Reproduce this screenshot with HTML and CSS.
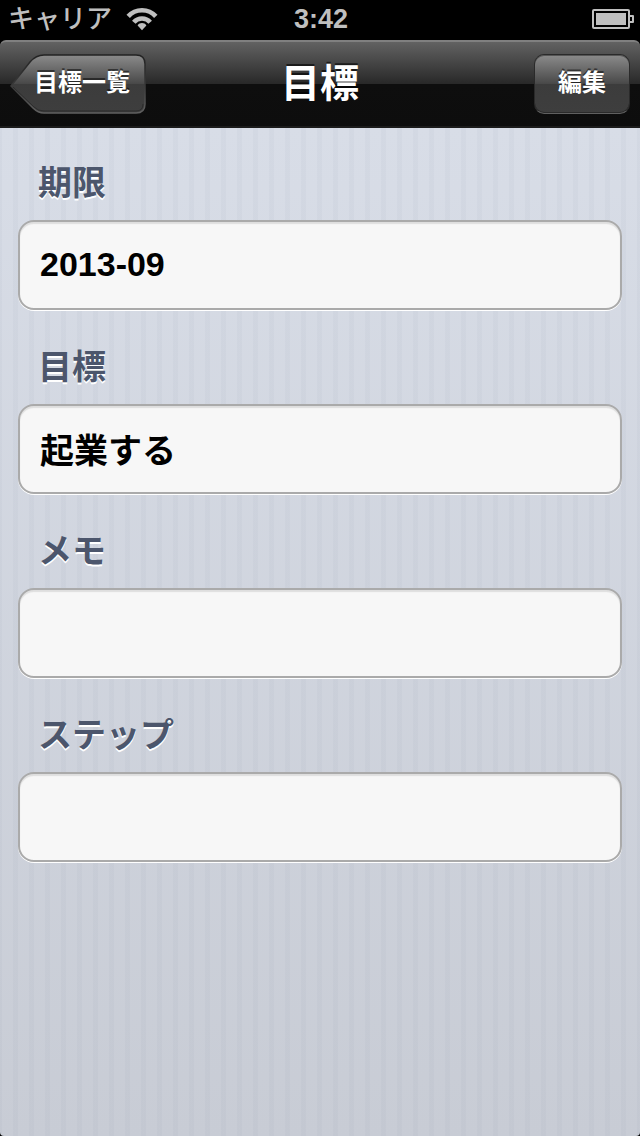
FILE: index.html
```html
<!DOCTYPE html>
<html lang="ja">
<head>
<meta charset="utf-8">
<meta name="viewport" content="width=device-width, initial-scale=1">
<title>目標</title>
<link rel="stylesheet" href="styles.css">
</head>
<body>
<div class="status-bar">
  <div class="carrier">
    <span>キャリア</span>
    <svg class="wifi" width="32" height="24" viewBox="0 0 32 24" aria-hidden="true">
      <g fill="none" stroke="#bfbfbf" stroke-width="4.600">
        <path d="M2.200 9.400C9.500 1.200 22.500 1.200 29.800 9.400"/>
        <path d="M7.800 15.200C12 10.200 20 10.200 24.200 15.200"/>
      </g>
      <path fill="#bfbfbf" d="M16 23.200L11.600 18.400C13.600 15.200 18.400 15.200 20.400 18.400Z"/>
    </svg>
  </div>
  <span class="time">3:42</span>
  <svg class="battery" width="42" height="20" viewBox="0 0 42 20" aria-hidden="true">
    <rect x="1" y="1" width="36" height="18" rx="1" fill="none" stroke="#bfbfbf" stroke-width="2"/>
    <rect x="4" y="4" width="30" height="12" fill="#bfbfbf"/>
    <path d="M38 7H41V13H38" fill="none" stroke="#bfbfbf" stroke-width="2" stroke-linejoin="round"/>
  </svg>
</div>
<header class="nav-bar">
  <button class="nav-button back" type="button">
    <svg class="back-shape" width="136" height="60" viewBox="0 0 136 60" aria-hidden="true">
      <defs>
        <linearGradient id="face" x1="0" y1="0" x2="0" y2="1">
          <stop offset="0" stop-color="#8b8b8b"/>
          <stop offset=".5" stop-color="#484848"/>
          <stop offset=".5" stop-color="#3c3c3c"/>
          <stop offset="1" stop-color="#3e3e3e"/>
        </linearGradient>
        <linearGradient id="rim" x1="0" y1="0" x2="0" y2="1">
          <stop offset="0" stop-color="#222"/>
          <stop offset=".5" stop-color="#383838"/>
          <stop offset="1" stop-color="#606060"/>
        </linearGradient>
      </defs>
      <path fill="url(#face)" stroke="url(#rim)" stroke-width="1.500" d="M1 32L20 8Q26 1 34 1H126Q135 1 135 10V50Q135 59 126 59H34Q28 59 23 54Z"/>
      <path fill="none" stroke="#222" stroke-opacity=".6" d="M3 33L24 53Q28 57 34 57H126Q133 57 133 50"/>
    </svg>
    <span class="back-text">目標一覧</span>
  </button>
  <h1 class="title">目標</h1>
  <button class="nav-button edit" type="button">編集</button>
</header>
<main class="form">
  <div class="field">
    <label class="label" for="deadline">期限</label>
    <input class="box" id="deadline" type="text" value="2013-09" readonly>
  </div>
  <div class="field">
    <label class="label" for="goal">目標</label>
    <input class="box" id="goal" type="text" value="起業する" readonly>
  </div>
  <div class="field">
    <label class="label" for="memo">メモ</label>
    <input class="box" id="memo" type="text" readonly>
  </div>
  <div class="field">
    <label class="label" for="steps">ステップ</label>
    <input class="box" id="steps" type="text" readonly>
  </div>
</main>
</body>
</html>
```
FILE: styles.css
```css
* {
  box-sizing: border-box;
}

body {
  margin: 0;
  min-height: 100vh;
  display: flex;
  flex-direction: column;
  background: #000;
  font-family: "Liberation Sans", "Noto Sans CJK JP", sans-serif;
}

.status-bar {
  display: grid;
  grid-template-columns: 1fr auto 1fr;
  align-items: center;
  height: 40px;
  padding: 0 6px 2px 8px;
  color: #bfbfbf;
}

.carrier {
  display: flex;
  align-items: center;
  gap: 14px;
  font-size: 26px;
  line-height: 38px;
  font-weight: 500;
}

.time {
  font-size: 27px;
  line-height: 38px;
  font-weight: bold;
}

.battery {
  justify-self: end;
}

.nav-bar {
  display: grid;
  grid-template-columns: 136px 1fr 136px;
  align-items: center;
  height: 88px;
  padding: 0 10px;
  border-top: 2px solid #808080;
  border-bottom: 2px solid #1c1c1c;
  border-radius: 6px 6px 0 0;
  background: linear-gradient(#626262 0, #282828 42px, #0e0e0e 42px, #0d0d0d 100%);
  color: #fff;
}

.nav-button {
  position: relative;
  height: 60px;
  margin: 0;
  padding: 0 23px 2px;
  border: 0;
  background: none;
  color: #fff;
  font: bold 24px/56px "Liberation Sans", "Noto Sans CJK JP", sans-serif;
  text-shadow: 0 -2px 0 rgba(0, 0, 0, .5);
}

.back {
  justify-self: start;
  padding: 0 16px 2px 24px;
}

.back-shape {
  position: absolute;
  inset: 0;
}

.back-text {
  position: relative;
}

.edit {
  justify-self: end;
  border: 1px solid #2a2a2a;
  border-bottom-color: #606060;
  border-radius: 10px;
  background: linear-gradient(#8b8b8b 0, #484848 29px, #3c3c3c 29px, #3e3e3e 100%);
  box-shadow: inset 0 -1px 0 #2a2a2a, inset 0 1px 0 #555;
}

.title {
  margin: 0;
  font-size: 39px;
  line-height: 78px;
  font-weight: bold;
  text-align: center;
  text-shadow: 0 -2px 0 rgba(0, 0, 0, .6);
}

.form {
  flex: 1;
  display: flex;
  flex-direction: column;
  gap: 34px;
  padding: 32px 18px;
  border-radius: 0 0 4px 4px;
  background:
    repeating-linear-gradient(90deg, rgba(90, 105, 130, .04) 0 2px, transparent 2px 13px, rgba(90, 105, 130, .04) 13px 16px),
    linear-gradient(#d8dde7, #c8ccd5);
}

.field {
  display: flex;
  flex-direction: column;
  gap: 14px;
}

.label {
  padding-left: 20px;
  color: #4c566c;
  font-size: 34px;
  line-height: 46px;
  font-weight: bold;
  text-shadow: 0 2px 0 #fff;
}

.box {
  width: 100%;
  height: 90px;
  margin: 0;
  padding: 0 20px 2px;
  border: 2px solid #aaa;
  border-radius: 16px;
  background: #f7f7f7;
  box-shadow: 0 1px 0 #fff, inset 0 2px 1px #dedede;
  color: #000;
  font: bold 34px/48px "Liberation Sans", "Noto Sans CJK JP", sans-serif;
  outline: 0;
}
```
